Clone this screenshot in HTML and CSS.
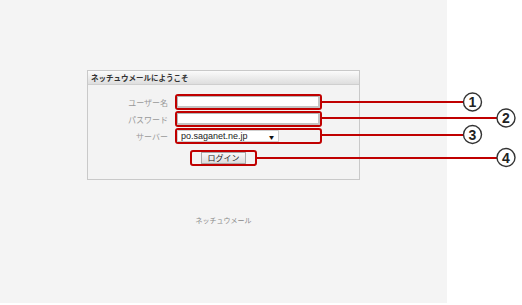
FILE: index.html
```html
<!DOCTYPE html>
<html lang="ja">
<head>
  <meta charset="utf-8">
  <title>ネッチュウメール</title>
  <link rel="stylesheet" href="styles.css">
</head>
<body>
  <div class="screen">
    <form class="panel">
      <div class="panel-head">ネッチュウメールにようこそ</div>
      <div class="panel-body">
        <label class="field-label" for="user">ユーザー名</label>
        <div class="mark"><input type="text" id="user" class="text-input"></div>
        <label class="field-label" for="pass">パスワード</label>
        <div class="mark"><input type="password" id="pass" class="text-input"></div>
        <label class="field-label" for="server">サーバー</label>
        <div class="mark">
          <span class="server-select">
            <select id="server" class="server">
              <option>po.saganet.ne.jp</option>
            </select>
          </span>
        </div>
        <div class="login-row">
          <div class="mark mark-button"><button type="button" class="login">ログイン</button></div>
        </div>
      </div>
    </form>
    <p class="footer">ネッチュウメール</p>
  </div>

  <!-- callouts -->
  <svg class="callouts" width="522" height="305" viewBox="0 0 522 305">
    <g stroke="#c00000" stroke-width="2">
      <line x1="322" y1="102" x2="463" y2="102"/>
      <line x1="322" y1="118" x2="497" y2="118"/>
      <line x1="322" y1="135" x2="463" y2="135"/>
      <line x1="257" y1="158" x2="497" y2="158"/>
    </g>
    <g fill="#fff" stroke="#333" stroke-width="1.4">
      <circle cx="472.5" cy="102" r="9"/>
      <circle cx="506" cy="118" r="9"/>
      <circle cx="472.5" cy="134.5" r="9"/>
      <circle cx="506" cy="157.5" r="9"/>
    </g>
    <g class="num" text-anchor="middle">
      <text x="472.5" y="107">1</text>
      <text x="506" y="123">2</text>
      <text x="472.5" y="139.5">3</text>
      <text x="506" y="162.5">4</text>
    </g>
  </svg>
</body>
</html>
```

FILE: styles.css
```css
/* basic layout */
body {
  margin: 0;
  background: #fff;
  font-family: "Noto Sans CJK JP", "Liberation Sans", sans-serif;
}

.screen {
  width: 447px;
  height: 303px;
  background: #f4f4f4;
  padding-top: 70px;
  box-sizing: border-box;
}

/* login panel */
.panel {
  width: 273px;
  margin: 0 auto;
  border: 1px solid #c9c9c9;
  box-sizing: border-box;
  background: #f3f3f3;
}

.panel-head {
  height: 13px;
  line-height: 13px;
  padding-left: 3px;
  font-size: 7.5px;
  font-weight: bold;
  color: #333;
  background: linear-gradient(#fbfbfb, #dedede);
  border-bottom: 1px solid #cfcfcf;
}

.panel-body {
  display: grid;
  grid-template-columns: 80px 147px 1fr;
  column-gap: 7px;
  row-gap: 1px;
  align-items: center;
  padding: 9px 0 13px;
}

.field-label {
  grid-column: 1;
  text-align: right;
  font-size: 8px;
  color: #999;
}

/* red marks round the fields */
.mark {
  grid-column: 2;
  height: 16px;
  box-sizing: border-box;
  border: 2px solid #c00000;
  border-radius: 3px;
  padding: 0 2px 0 0;
  display: flex;
  align-items: center;
}

.text-input {
  width: 143px;
  height: 12px;
  box-sizing: border-box;
  margin: 0;
  padding: 0;
  background: #fff;
  border: 1px solid #b5b5b5;
  border-right: 2px solid #c4c4c4;
  border-bottom: 2px solid #c4c4c4;
}

.server-select {
  position: relative;
  display: block;
  width: 102px;
}

.server-select::after {
  content: "\25BC";
  position: absolute;
  right: 5px;
  top: 3px;
  font-size: 5px;
  color: #111;
  pointer-events: none;
}

.server {
  appearance: none;
  -webkit-appearance: none;
  display: block;
  width: 102px;
  height: 12px;
  margin: 0;
  padding: 0 0 0 3px;
  border: 1px solid #cfcfcf;
  border-radius: 0;
  background: #fff;
  font-family: "Liberation Sans", sans-serif;
  font-size: 9px;
  line-height: 10px;
  color: #222;
}

/* button */
.login-row {
  grid-column: 1 / -1;
  display: flex;
  justify-content: center;
  margin-top: 5px;
}

.mark-button {
  width: 67px;
  padding: 0;
  justify-content: center;
}

.login {
  width: 45px;
  height: 12px;
  margin: 0;
  padding: 0;
  border: 1px solid #a8a8a8;
  background: linear-gradient(#f8f8f8, #dcdcdc);
  font-family: "Noto Sans CJK JP", sans-serif;
  font-size: 8px;
  line-height: 10px;
  color: #222;
}

.footer {
  margin: 35px 0 0;
  text-align: center;
  font-size: 7px;
  color: #888;
}

/* callouts on top */
.callouts {
  position: absolute;
  left: 0;
  top: 0;
}

.num {
  font-family: "Liberation Sans Narrow", "Liberation Sans", sans-serif;
  font-size: 14px;
  font-weight: bold;
  fill: #222;
}
```
